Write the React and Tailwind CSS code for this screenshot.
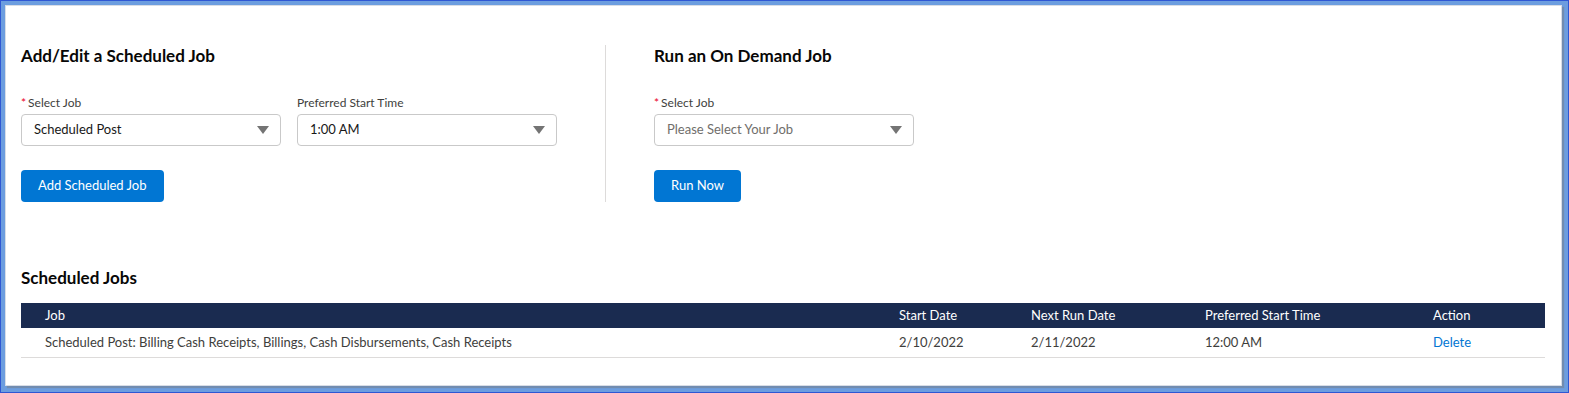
function Caret() {
  return (
    <svg width="12" height="8" viewBox="0 0 12 8" className="shrink-0">
      <path d="M0 0 H12 L6 8 Z" fill="#747474" />
    </svg>
  );
}

function SelectBox({ value, placeholder }) {
  return (
    <div className="flex h-[32px] w-[260px] items-center justify-between rounded-[4px] border border-[#c9c9c9] bg-white pl-3 pr-[11px]">
      <span className={`text-[13px] ${placeholder ? "text-[#706e6b]" : "text-[#181818]"}`}>{value}</span>
      <Caret />
    </div>
  );
}

function Field({ label, required, children }) {
  return (
    <div className="flex flex-col">
      <div className="mb-[3px] flex h-[16px] items-center text-[12px] text-[#3e3e3c]">
        {required && <span className="mr-[2px] text-[#ea001e]">*</span>}
        {label}
      </div>
      {children}
    </div>
  );
}

function Button({ children }) {
  return (
    <button className="h-[32px] rounded-[4px] bg-[#0176d3] px-[17px] text-[13px] text-white">
      {children}
    </button>
  );
}

export default function App() {
  const cols = "grid grid-cols-[854px_132px_174px_228px_1fr]";
  return (
    <div
      className="h-[393px] w-[1569px] border border-[#2f57d3] bg-[#6c9ddf] pt-[4px] pl-[4px]"
      style={{ fontFamily: 'Lato, "Open Sans", sans-serif' }}
    >
      <div className="h-[381px] w-[1557px] border border-[#d8dde6] bg-white pl-[15px] pr-[16px] pt-[40px] shadow-[2px_2px_1px_rgba(120,120,120,0.45)]">
        {/* Top section */}
        <div className="flex">
          <div className="w-[584px]">
            <h2 className="h-[20px] text-[17px] font-bold leading-[20px] text-[#080707]">
              Add/Edit a Scheduled Job
            </h2>
            <div className="mt-[29px] flex gap-4">
              <Field label="Select Job" required>
                <SelectBox value="Scheduled Post" />
              </Field>
              <Field label="Preferred Start Time">
                <SelectBox value="1:00 AM" />
              </Field>
            </div>
            <div className="mt-[24px]">
              <Button>Add Scheduled Job</Button>
            </div>
          </div>
          <div className="mt-[-1px] w-px self-stretch bg-[#dddbda]" />
          <div className="pl-[48px]">
            <h2 className="h-[20px] text-[17px] font-bold leading-[20px] text-[#080707]">
              Run an On Demand Job
            </h2>
            <div className="mt-[29px]">
              <Field label="Select Job" required>
                <SelectBox value="Please Select Your Job" placeholder />
              </Field>
            </div>
            <div className="mt-[24px]">
              <Button>Run Now</Button>
            </div>
          </div>
        </div>

        {/* Scheduled jobs table */}
        <h2 className="mt-[66px] h-[20px] text-[17px] font-bold leading-[20px] text-[#080707]">
          Scheduled Jobs
        </h2>
        <div className="mt-[15px] text-[13px]">
          <div className={`${cols} h-[25px] items-center bg-[#1a2b50] pl-[24px] text-white`}>
            <span>Job</span>
            <span>Start Date</span>
            <span>Next Run Date</span>
            <span>Preferred Start Time</span>
            <span>Action</span>
          </div>
          <div className={`${cols} h-[30px] items-center border-b border-[#dddbda] pl-[24px] text-[#3e3e3c]`}>
            <span>Scheduled Post: Billing Cash Receipts, Billings, Cash Disbursements, Cash Receipts</span>
            <span>2/10/2022</span>
            <span>2/11/2022</span>
            <span>12:00 AM</span>
            <span className="text-[#0176d3]">Delete</span>
          </div>
        </div>
      </div>
    </div>
  );
}
